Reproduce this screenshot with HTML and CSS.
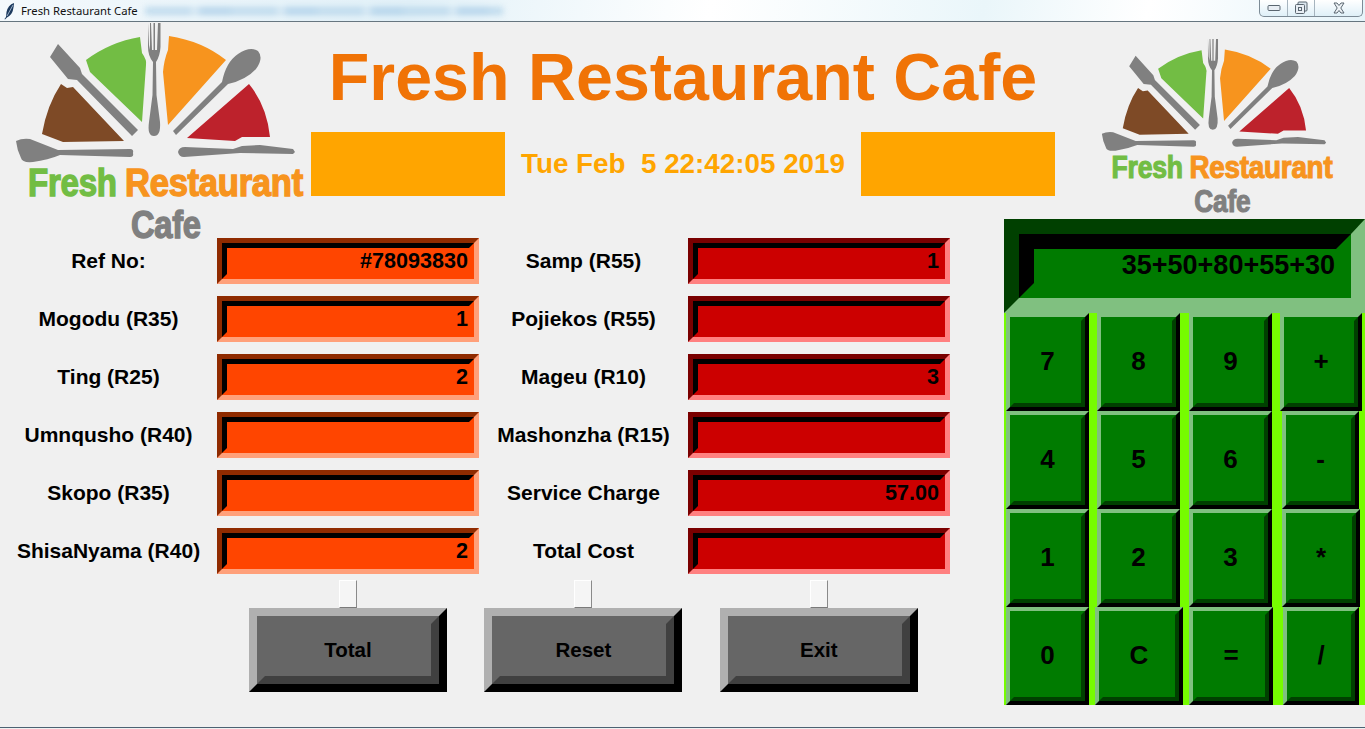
FILE: index.html
```html
<!DOCTYPE html>
<html lang="en">
<head>
<meta charset="utf-8">
<title>Fresh Restaurant Cafe</title>
<link rel="stylesheet" href="styles.css">
</head>
<body>
<div class="window">
  <header class="titlebar">
    <svg class="feather" width="14" height="18" viewBox="0 0 14 18"><path d="M11 1Q5 3 3.500 10L3 15L1.500 17L2 17.500L4 15.500Q9 13 10 8Q11 4 11 1Z" fill="#1c3a5e"/><path d="M10 3L4 14" stroke="#cfe0f0" stroke-width=".7"/></svg>
    <span class="titlebar-name">Fresh Restaurant Cafe</span>
    <span class="titlebar-path"></span>
    <div class="controls">
      <span class="ctl ctl-min"><svg width="14" height="8" viewBox="0 0 14 8"><rect x="1" y="1.500" width="12" height="5" rx="1" fill="#e8eef4" stroke="#5a6670"/></svg></span>
      <span class="ctl ctl-max"><svg width="14" height="14" viewBox="0 0 14 14"><rect x="4" y="1" width="9" height="9" rx="1" fill="#dbe6ee" stroke="#5a6670"/><rect x="1.500" y="3.500" width="9" height="9" rx="1" fill="#e8eef4" stroke="#5a6670"/><rect x="4.500" y="6.500" width="3" height="3" fill="none" stroke="#5a6670"/></svg></span>
      <span class="ctl ctl-close"><svg width="14" height="12" viewBox="0 0 14 12"><path d="M2 1H5L7 3.500L9 1H12L8.800 6L12 11H9L7 8.500L5 11H2L5.200 6Z" fill="#eef3f7" stroke="#5a6670"/></svg></span>
    </div>
  </header>

  <section class="banner">
    <svg class="logo-left" width="311" height="226" viewBox="0 22 311 226">
      <path fill="#72bd44" d="M86 60Q110 42 140 37L142 53Q147 60 146 65L142 122L90 72Z"/>
      <path fill="#f7941e" d="M169 36Q202 41 226 60L168 125L163 72Q164 60 168 50Z"/>
      <path fill="#7e4a26" d="M61 84L67 88L73 87L124 141L63 142L42 134Q47 105 61 84Z"/>
      <path fill="#bd222c" d="M249 84Q267 106 270 137L242 137L235 141L187 138Z"/>
      <path fill="#808080" d="M58 44L50 57L68 79L77 80L132 136L138 130L82 74L80 68Z"/>
      <path fill="#808080" d="M148 23L149 45L150 50L150 23L151 23L152 50L153.500 50L153.500 23L155 23L155 50L157 50L158 23L159 23L159.500 23L160.500 23L160.500 47Q160 56 156 62L156.500 95L160 122Q161 136 154 136Q147 136 149 122L152.500 95L153 62Q148 56 148 47Z"/>
      <path fill="#808080" d="M176 135L173 131L222 82Q226 62 238 54Q250 46 258 51Q264 58 256 69Q246 80 228 84Z"/>
      <path fill="#808080" d="M16 141Q22 138 30 139L58 150L130 149Q134 149 133 153Q134 157 130 157L60 155Q48 160 33 162Q22 163 21 158Q17 150 16 141Z"/>
      <path fill="#808080" d="M178 152Q179 147 185 147L233 149L242 146L260 145L293 149L295 152L293 154L240 153L184 157Q179 157 178 152Z"/>
      <text class="logo-text" transform="translate(28 196) scale(.87 1)" fill="#72bd44" stroke="#72bd44">Fresh</text>
      <text class="logo-text" transform="translate(125 196) scale(.91 1)" fill="#f7941e" stroke="#f7941e">Restaurant</text>
      <text class="logo-text" transform="translate(131 238) scale(.86 1)" fill="#808080" stroke="#808080">Cafe</text>
    </svg>
    <div class="banner-centre">
      <h1 class="app-title">Fresh Restaurant Cafe</h1>
      <div class="clock-row">
        <div class="clock-box"></div>
        <div class="clock">Tue Feb  5 22:42:05 2019</div>
        <div class="clock-box"></div>
      </div>
    </div>
    <svg class="logo-right" width="250" height="182" viewBox="0 22 311 226">
      <path fill="#72bd44" d="M86 60Q110 42 140 37L142 53Q147 60 146 65L142 122L90 72Z"/>
      <path fill="#f7941e" d="M169 36Q202 41 226 60L168 125L163 72Q164 60 168 50Z"/>
      <path fill="#7e4a26" d="M61 84L67 88L73 87L124 141L63 142L42 134Q47 105 61 84Z"/>
      <path fill="#bd222c" d="M249 84Q267 106 270 137L242 137L235 141L187 138Z"/>
      <path fill="#808080" d="M58 44L50 57L68 79L77 80L132 136L138 130L82 74L80 68Z"/>
      <path fill="#808080" d="M148 23L149 45L150 50L150 23L151 23L152 50L153.500 50L153.500 23L155 23L155 50L157 50L158 23L159 23L159.500 23L160.500 23L160.500 47Q160 56 156 62L156.500 95L160 122Q161 136 154 136Q147 136 149 122L152.500 95L153 62Q148 56 148 47Z"/>
      <path fill="#808080" d="M176 135L173 131L222 82Q226 62 238 54Q250 46 258 51Q264 58 256 69Q246 80 228 84Z"/>
      <path fill="#808080" d="M16 141Q22 138 30 139L58 150L130 149Q134 149 133 153Q134 157 130 157L60 155Q48 160 33 162Q22 163 21 158Q17 150 16 141Z"/>
      <path fill="#808080" d="M178 152Q179 147 185 147L233 149L242 146L260 145L293 149L295 152L293 154L240 153L184 157Q179 157 178 152Z"/>
      <text class="logo-text" transform="translate(28 196) scale(.87 1)" fill="#72bd44" stroke="#72bd44">Fresh</text>
      <text class="logo-text" transform="translate(125 196) scale(.91 1)" fill="#f7941e" stroke="#f7941e">Restaurant</text>
      <text class="logo-text" transform="translate(131 238) scale(.86 1)" fill="#808080" stroke="#808080">Cafe</text>
    </svg>
  </section>

  <main class="main">
    <div class="order">
      <div class="fields">
        <div class="label">Ref No:</div>
        <div class="entry entry-orange"><div class="entry-in">#78093830</div></div>
        <div class="label">Samp (R55)</div>
        <div class="entry entry-red"><div class="entry-in">1</div></div>

        <div class="label">Mogodu (R35)</div>
        <div class="entry entry-orange"><div class="entry-in">1</div></div>
        <div class="label">Pojiekos (R55)</div>
        <div class="entry entry-red"><div class="entry-in"></div></div>

        <div class="label">Ting (R25)</div>
        <div class="entry entry-orange"><div class="entry-in">2</div></div>
        <div class="label">Mageu (R10)</div>
        <div class="entry entry-red"><div class="entry-in">3</div></div>

        <div class="label">Umnqusho (R40)</div>
        <div class="entry entry-orange"><div class="entry-in"></div></div>
        <div class="label">Mashonzha (R15)</div>
        <div class="entry entry-red"><div class="entry-in"></div></div>

        <div class="label">Skopo (R35)</div>
        <div class="entry entry-orange"><div class="entry-in"></div></div>
        <div class="label">Service Charge</div>
        <div class="entry entry-red"><div class="entry-in">57.00</div></div>

        <div class="label">ShisaNyama (R40)</div>
        <div class="entry entry-orange"><div class="entry-in">2</div></div>
        <div class="label">Total Cost</div>
        <div class="entry entry-red"><div class="entry-in"></div></div>
      </div>

      <div class="actions">
        <div class="action"><span class="tab"></span><div class="btn"><div class="btn-in">Total</div></div></div>
        <div class="action"><span class="tab"></span><div class="btn"><div class="btn-in">Reset</div></div></div>
        <div class="action"><span class="tab"></span><div class="btn"><div class="btn-in">Exit</div></div></div>
      </div>
    </div>

    <div class="calc">
      <div class="display"><div class="display-in">35+50+80+55+30</div></div>
      <div class="keys">
        <div class="key-row row-1">
          <div class="key"><div class="key-in">7</div></div>
          <div class="key"><div class="key-in">8</div></div>
          <div class="key"><div class="key-in">9</div></div>
          <div class="key"><div class="key-in">+</div></div>
        </div>
        <div class="key-row row-2">
          <div class="key"><div class="key-in">4</div></div>
          <div class="key"><div class="key-in">5</div></div>
          <div class="key"><div class="key-in">6</div></div>
          <div class="key"><div class="key-in">-</div></div>
        </div>
        <div class="key-row row-3">
          <div class="key"><div class="key-in">1</div></div>
          <div class="key"><div class="key-in">2</div></div>
          <div class="key"><div class="key-in">3</div></div>
          <div class="key"><div class="key-in">*</div></div>
        </div>
        <div class="key-row row-4">
          <div class="key"><div class="key-in">0</div></div>
          <div class="key"><div class="key-in">C</div></div>
          <div class="key"><div class="key-in">=</div></div>
          <div class="key"><div class="key-in">/</div></div>
        </div>
      </div>
    </div>
  </main>
</div>
</body>
</html>
```

FILE: styles.css
```css
* { box-sizing: border-box; }
html, body { margin: 0; padding: 0; height: 729px; overflow: hidden; background: #f0f0f0; }
body { font-family: "Liberation Sans", Arial, sans-serif; color: #000; }
.logo-text { font: bold 38px "Liberation Sans", Arial, sans-serif; stroke-width: 1.4; letter-spacing: -.3px; }

.window { width: 1365px; height: 728px; border-bottom: 1px solid #4c6272; overflow: hidden; }

.titlebar {
  display: flex; align-items: center; height: 22px; padding-left: 3px;
  border-bottom: 1px solid #66757f;
  background: linear-gradient(100deg, #f4f9fc 0%, #e2f1f8 30%, #ffffff 52%, #eaf6fa 72%, #ffffff 84%, #e6f4fa 100%);
}
.feather { flex: none; }
.titlebar-name { margin-left: 4px; font: 11.3px "Noto Sans", sans-serif; white-space: nowrap; color: #111; }
.titlebar-path {
  width: 358px; height: 8px; margin-left: 7px; margin-top: 1px;
  background: repeating-linear-gradient(90deg, #b4d4ea 0 46px, #cfe4f2 46px 54px, #a9cde8 54px 86px);
  filter: blur(3px); opacity: .8;
}
.controls {
  display: flex; margin-left: auto; margin-right: 2px; align-self: flex-start; height: 17px;
  border: 1px solid #7c8b96; border-top: 0; border-radius: 0 0 5px 5px;
  background: linear-gradient(180deg, #ffffff, #dff0f8);
}
.ctl { display: flex; align-items: center; justify-content: center; height: 100%; }
.ctl-min { width: 28px; border-right: 1px solid #a6b4be; }
.ctl-max { width: 27px; border-right: 1px solid #a6b4be; }
.ctl-close { width: 47px; }

.banner { display: flex; align-items: flex-start; height: 197px; }
.logo-left { flex: none; overflow: visible; }
.banner-centre { flex: none; width: 744px; }
.logo-right { flex: none; margin-left: 34px; margin-top: 16px; overflow: visible; }
.app-title {
  margin: 0; height: 110px; line-height: 110px; text-align: center; white-space: nowrap;
  font-size: 66.4px; font-weight: bold; color: #f07306;
}
.clock-row { display: flex; align-items: center; justify-content: space-between; }
.clock-box { width: 194px; height: 64px; background: #ffa500; }
.clock { font-size: 27.8px; font-weight: bold; color: #ffa500; white-space: pre; }

.main { display: flex; align-items: flex-start; }
.order { flex: none; width: 1004px; padding: 19px 0 0 8px; }
.fields {
  display: grid; grid-template-columns: 201px 262px 193px 262px;
  grid-auto-rows: 46px; column-gap: 8px; row-gap: 12px;
}
.label { display: flex; align-items: center; justify-content: center; font-size: 21px; font-weight: bold; white-space: nowrap; }
.entry { border-style: solid; border-width: 5px; }
.entry-orange { border-color: #8f2b00 #ffa07a #ffa07a #8f2b00; }
.entry-red { border-color: #7a0000 #ff8080 #ff8080 #7a0000; }
.entry-in {
  height: 36px; padding-right: 1px; text-align: right;
  border-style: solid; border-width: 5px;
  font-size: 21.6px; font-weight: bold; line-height: 25px;
}
.entry-orange .entry-in { background: #ff4500; border-color: #000 #ff4500 #ff4500 #000; }
.entry-red .entry-in { background: #cc0000; border-color: #000 #cc0000 #cc0000 #000; }

.actions { display: flex; column-gap: 37.4px; padding-left: 241px; margin-top: 6px; }
.action { display: flex; flex-direction: column; align-items: center; }
.tab { width: 18px; height: 28px; background: #f5f5f5; border: 1px solid; border-color: #ffffff #8a8a8a #7a7a7a #ffffff; }
.btn { width: 198px; height: 84px; border-style: solid; border-width: 8px; border-color: #b0b0b0 #000 #000 #b0b0b0; }
.btn-in {
  display: flex; align-items: center; justify-content: center; height: 68px;
  border-style: solid; border-width: 8px; border-color: #666 #404040 #404040 #666;
  background: #666; font-size: 20.5px; font-weight: bold;
}

.calc { flex: none; width: 361px; }
.display { height: 94px; border-style: solid; border-width: 15px 14px 15px 15px; border-color: #004000 #80c080 #80c080 #004000; }
.display-in {
  height: 64px; padding-right: 1px; text-align: right;
  border-style: solid; border-width: 15px; border-color: #000 #007b00 #007b00 #000;
  background: #007b00; font-size: 27px; font-weight: bold; line-height: 32px; white-space: nowrap;
}

.keys { height: 392px; background: #76fc00; }
.key-row { display: flex; height: 98px; padding-left: 2px; }
.key {
  flex: none; width: 83px; margin-left: 8px;
  border-style: solid; border-width: 4px; border-color: #80c080 #000 #000 #80c080;
}
.key:first-child { margin-left: 0; }
.key:nth-child(3) { margin-left: 9px; }
.key:nth-child(4) { margin-left: 10px; width: 77px; }
.row-1 .key:nth-child(4) { margin-left: 8px; width: 82px; }
.row-3 .key:nth-child(4) { width: 78px; }
.row-4 .key:nth-child(2) { margin-left: 6px; width: 88px; }
.row-4 .key:nth-child(3) { margin-left: 6px; width: 84px; }
.row-4 .key:nth-child(4) { margin-left: 10px; width: 76px; }
.key-in {
  display: flex; align-items: center; justify-content: center; height: 90px; padding-bottom: 2px;
  border-style: solid; border-width: 4px; border-color: #007b00 #004000 #004000 #007b00;
  background: #007b00; font-size: 26px; font-weight: bold;
}
```
